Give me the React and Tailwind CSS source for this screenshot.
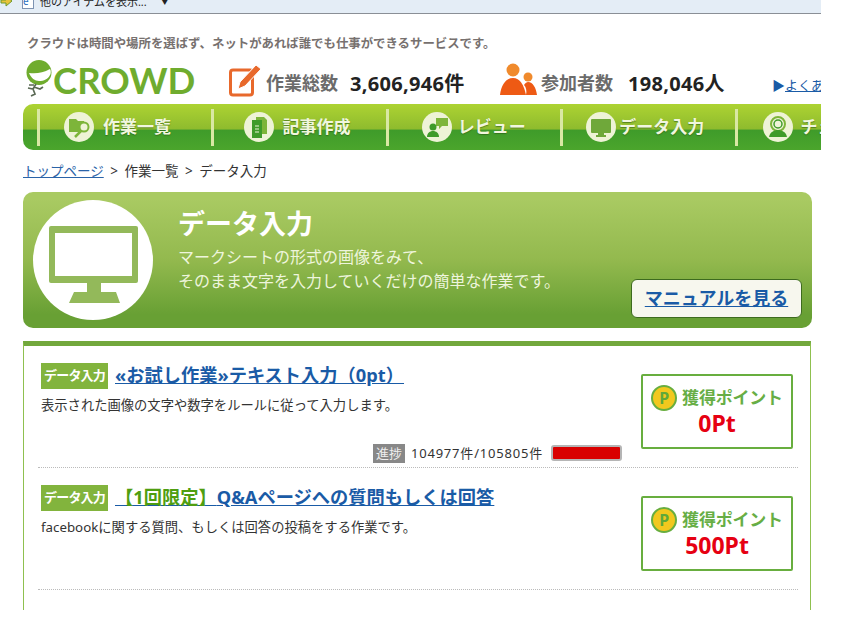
const jp = "font-['Noto_Sans','Noto_Sans_CJK_JP',sans-serif]"

function ToolbarArrow() {
  return (
    <svg width="13" height="14" viewBox="0 0 13 14">
      <path d="M1 5h5V1l6 5-6 5V8H1z" fill="#e8c33a" stroke="#6f9a2c" strokeWidth="1" />
    </svg>
  )
}

function Logo() {
  return (
    <svg width="30" height="38" viewBox="0 0 30 38" className="shrink-0">
      <circle cx="15" cy="12.5" r="12.5" fill="#6fac2e" />
      <path d="M5 13c7 1 14 0 21-4 1 1 1 5 0 6-2 4-6 6-11 6-4 0-8-3-10-8z" fill="#fff" />
      <path d="M12 24l-3 5-5-1M9 29l2 5-4 2M10 27l6 2 3-2M10 25l-5 0" fill="none" stroke="#5b6a55" strokeWidth="1.7" />
    </svg>
  )
}

function PencilIcon() {
  return (
    <svg width="34" height="34" viewBox="0 0 34 34" className="-mt-[4px] shrink-0">
      <rect x="1.5" y="7" width="22" height="25" rx="2.5" fill="#fff" stroke="#e8692c" strokeWidth="3" />
      <path d="M9 26l2-7L27 2l5 4-16 17z" fill="#e8692c" stroke="#fff" strokeWidth="1" />
    </svg>
  )
}

function PeopleIcon() {
  return (
    <svg width="38" height="34" viewBox="0 0 38 34" className="-mt-[4px] shrink-0">
      <circle cx="13" cy="7" r="6.5" fill="#f08a2c" />
      <path d="M0 32c1-10 6-17 13-17s11 7 13 17z" fill="#ee5a14" />
      <circle cx="28" cy="14" r="4.5" fill="#f08a2c" />
      <path d="M26 32c1-4 0-8-2-10 1-2 3-3 4-3 5 0 8 6 9 13z" fill="#ee5a14" />
    </svg>
  )
}

function NavIcon({ kind }) {
  const g = '#7db53a'
  const d = '#3f9b2a'
  const bg = '#eef3d6'
  return (
    <svg width="30" height="30" viewBox="0 0 30 30" className="shrink-0">
      <circle cx="15" cy="15" r="15" fill={bg} />
      {kind === 'list' && (
        <>
          <path d="M5 7h7l2 2h6v11H5z" fill={g} />
          <circle cx="20" cy="15" r="4.5" fill={bg} stroke={g} strokeWidth="2" />
          <path d="M17 19l-6 6" stroke={g} strokeWidth="2.5" />
        </>
      )}
      {kind === 'doc' && (
        <>
          <path d="M12 5h8l3 3v14H12z" fill={g} />
          <path d="M8 8h10v18H8z" fill={d} />
          <path d="M11 14h4M11 17h4M11 20h4" stroke={bg} strokeWidth="1" />
        </>
      )}
      {kind === 'review' && (
        <>
          <path d="M14 6h12v8h-6l-3 3v-3h-3z" fill={g} />
          <circle cx="11" cy="15" r="3.5" fill={d} />
          <path d="M5 25c0-4 3-6 6-6s6 2 6 6z" fill={d} />
        </>
      )}
      {kind === 'monitor' && (
        <>
          <rect x="5" y="7" width="20" height="14" rx="1" fill="#6fa83a" />
          <path d="M12 21h6v2h2v2H10v-2h2z" fill="#6fa83a" />
        </>
      )}
      {kind === 'check' && (
        <>
          <circle cx="15" cy="12" r="7" fill="none" stroke={g} strokeWidth="2" />
          <circle cx="15" cy="12" r="4" fill={bg} stroke={d} strokeWidth="1.5" />
          <path d="M6 25c1-5 5-7 9-7s8 2 9 7z" fill={d} />
        </>
      )}
    </svg>
  )
}

function NavItem({ kind, label, pad, gap }) {
  return (
    <div className="flex w-[174.4px] shrink-0 items-center">
      <div className="h-[37px] w-[3px] shrink-0 bg-[#d9e8a4]" />
      <div className={`flex items-center ${pad} ${gap}`}>
        <NavIcon kind={kind} />
        <span className="whitespace-nowrap text-[17px] font-bold text-[#f1f6de] [text-shadow:0_1px_1px_rgba(40,90,20,0.6)]">{label}</span>
      </div>
    </div>
  )
}

function PointBox({ points }) {
  return (
    <div className="mr-[5px] mt-[28px] flex h-[75px] w-[152px] shrink-0 flex-col items-center rounded-[2px] border-2 border-[#68ae3f] bg-white pt-[9px]">
      <div className="flex items-center gap-[5px]">
        <div className="flex h-[26px] w-[26px] items-center justify-center rounded-full border-2 border-[#68ae3f] bg-[#f2c81e] text-[16px] font-bold leading-none text-[#5fa83a]">P</div>
        <span className="whitespace-nowrap text-[17px] font-bold leading-[26px] tracking-[-0.2px] text-[#67ae45]">獲得ポイント</span>
      </div>
      <span className="text-[23px] font-bold leading-[24px] text-[#e60012]">{points}</span>
    </div>
  )
}

function WorkItem({ title, desc, points, progress }) {
  return (
    <div className="ml-[14px] mr-[12px] flex h-[122px] border-b border-dotted border-[#bbbbbb]">
      <div className="flex min-w-0 flex-1 flex-col pl-[3px] pr-[19px] pt-[17px]">
        <div className="flex items-center gap-[7px]">
          <span className="flex h-[26px] w-[67px] shrink-0 items-center justify-center whitespace-nowrap bg-[#82b43d] text-[13px] font-bold tracking-[-0.8px] text-white">データ入力</span>
          <a href="#" className="-mt-[2px] whitespace-nowrap text-[18.25px] font-bold leading-[24px] text-[#1a5ba6] underline underline-offset-[1px]">{title}</a>
        </div>
        <p className="mt-[7px] whitespace-nowrap text-[13.3px] leading-[18px] text-[#333333]">{desc}</p>
        {progress && (
          <div className="mt-auto flex items-center justify-end pb-[4px]">
            <span className="flex h-[19px] w-[32px] items-center justify-center bg-[#888888] text-[13px] text-[#eeeeee]">進捗</span>
            <span className="ml-[6px] whitespace-nowrap text-[13px] tracking-[0.8px] text-[#333333]">{progress}</span>
            <div className="ml-[8px] h-[16px] w-[71px] rounded-[3px] border-2 border-[#b5b5b5] bg-[#d90000]" />
          </div>
        )}
      </div>
      <PointBox points={points} />
    </div>
  )
}

export default function App() {
  return (
    <div className={`h-[636px] w-[846px] overflow-hidden bg-white ${jp}`}>
      <div className="h-[610px] w-[821px] overflow-hidden">
        {/* IE info bar, cut off at the top */}
        <div className="flex h-[14px] items-end overflow-hidden border-b border-[#8a8f96] bg-[#e4edf6] text-[11px] leading-[16px] text-[#222222]">
          <div className="flex -translate-y-[3px] items-center">
            <ToolbarArrow />
            <span className="ml-[9px] flex h-[14px] w-[12px] border border-[#7d93b2] bg-white text-[10px] leading-none text-[#2a6fc0]">e</span>
            <span className="ml-[6px] whitespace-nowrap">他のアイテムを表示...</span>
            <span className="ml-[15px] text-[6px]">▼</span>
          </div>
        </div>

        <p className="ml-[27px] mt-[23px] whitespace-nowrap text-[12.4px] font-bold leading-[14px] text-[#77716f]">クラウドは時間や場所を選ばず、ネットがあれば誰でも仕事ができるサービスです。</p>

        <div className="ml-[24px] mt-[9px] flex h-[44px] items-center">
          <div className="-mt-[5px] flex w-[205px] shrink-0 items-start">
            <Logo />
            <span className="-ml-[1px] font-['Lato',sans-serif] text-[36.5px] font-bold leading-[40px] text-[#6fac2e]">CROWD</span>
          </div>
          <PencilIcon />
          <span className="ml-[3px] mt-[3px] shrink-0 whitespace-nowrap text-[18px] font-bold text-[#6b6b6b]">作業総数</span>
          <span className="ml-[12px] mt-[3px] w-[115px] shrink-0 whitespace-nowrap text-[20px] font-bold tracking-[0.3px] text-[#222222]">3,606,946件</span>
          <div className="ml-[35px] shrink-0"><PeopleIcon /></div>
          <span className="ml-[3px] mt-[3px] shrink-0 whitespace-nowrap text-[18px] font-bold text-[#6b6b6b]">参加者数</span>
          <span className="ml-[15px] mt-[3px] w-[96px] shrink-0 whitespace-nowrap text-[20px] font-bold tracking-[0.3px] text-[#222222]">198,046人</span>
          <span className="ml-[48px] mt-[7px] shrink-0 whitespace-nowrap text-[13px] text-[#1a5ba6]">▶<a href="#" className="underline">よくあるご質問</a></span>
        </div>

        <nav className="ml-[23px] flex h-[46px] items-center overflow-hidden rounded-l-[10px] bg-[linear-gradient(#add332_0%,#8ebb2e_55%,#3f9b2a_56%,#4ba52c_100%)] pl-[14px]">
          <NavItem kind="list" label="作業一覧" pad="pl-[24px]" gap="gap-[9px]" />
          <NavItem kind="doc" label="記事作成" pad="pl-[30px]" gap="gap-[8px]" />
          <NavItem kind="review" label="レビュー" pad="pl-[33px]" gap="gap-[6px]" />
          <NavItem kind="monitor" label="データ入力" pad="pl-[23px]" gap="gap-[3px]" />
          <NavItem kind="check" label="チェック" pad="pl-[25px]" gap="gap-[8px]" />
        </nav>

        <p className="ml-[23px] mt-[11px] whitespace-nowrap text-[13.5px] leading-[20px] text-[#333333] [word-spacing:3px]">
          <a href="#" className="text-[#2a63a8] underline">トップページ</a> &gt; 作業一覧 &gt; データ入力
        </p>

        <section className="ml-[23px] mt-[11px] flex h-[136px] w-[789px] items-center rounded-[10px] bg-[linear-gradient(#a9ca62_5%,#93b94e_50%,#68a034_90%)] pl-[10px] pr-[10px]">
          <div className="flex h-[120px] w-[120px] shrink-0 items-center justify-center rounded-full bg-white">
            <svg width="89" height="77" viewBox="0 0 89 77" className="mt-[9px]">
              <rect x="0" y="0" width="89" height="57" rx="2" fill="#93b95a" />
              <rect x="6" y="7" width="77" height="43" fill="#fff" />
              <path d="M38 57h14v9h15l4 11H20l5-11h13z" fill="#93b95a" />
            </svg>
          </div>
          <div className="ml-[25px] flex-1 self-start pt-[14px]">
            <h1 className="whitespace-nowrap text-[27px] font-bold leading-[36px] text-white">データ入力</h1>
            <p className="mt-[3px] whitespace-nowrap text-[16px] leading-[24px] text-[#eef5dc]">マークシートの形式の画像をみて、<br />そのまま文字を入力していくだけの簡単な作業です。</p>
          </div>
          <a href="#" className="mt-[77px] flex h-[39px] w-[171px] shrink-0 items-center justify-center rounded-[6px] border border-[#3d6b1e] bg-[#f7f7ee] text-[18px] font-bold text-[#1a5ba6] underline">マニュアルを見る</a>
        </section>

        <section className="ml-[23px] mt-[13px] h-[300px] w-[788px] border-x border-t-[5px] border-x-[#8fc04f] border-t-[#72a83c]">
          <WorkItem
            title="«お試し作業»テキスト入力（0pt）"
            desc="表示された画像の文字や数字をルールに従って入力します。"
            points="0Pt"
            progress="104977件/105805件"
          />
          <WorkItem
            title={<><span className="text-[#4f9e10]">【1回限定】</span>Q&amp;Aページへの質問もしくは回答</>}
            desc="facebookに関する質問、もしくは回答の投稿をする作業です。"
            points="500Pt"
          />
        </section>
      </div>
    </div>
  )
}
